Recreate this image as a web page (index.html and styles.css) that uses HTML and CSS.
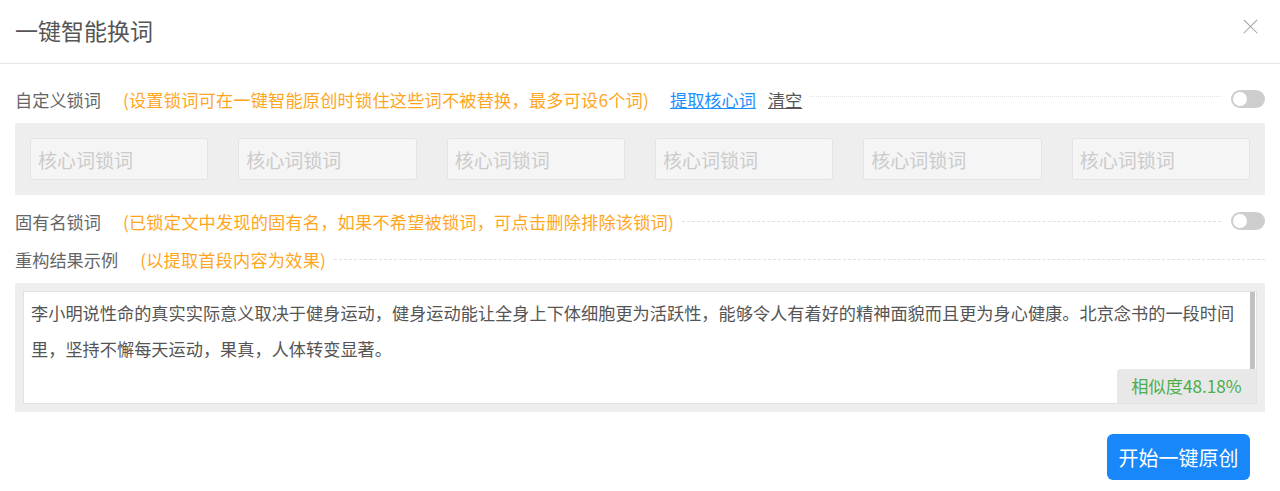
FILE: index.html
```html
<!DOCTYPE html>
<html lang="zh-CN">
<head>
    <meta charset="UTF-8">
    <title>一键智能换词</title>
    <link rel="stylesheet" href="styles.css">
</head>
<body>

    <div class="dialog">
        <!-- Kopfzeile -->
        <div class="dialog-header">
            <h2>一键智能换词</h2>
            <span class="close"></span>
        </div>

        <div class="dialog-body">
            <!-- 自定义锁词 -->
            <div class="row row-first">
                <span class="label">自定义锁词</span>
                <span class="hint">(设置锁词可在一键智能原创时锁住这些词不被替换，最多可设6个词)</span>
                <a href="#" class="link">提取核心词</a>
                <a href="#" class="link clear">清空</a>
                <span class="line dotted"></span>
                <span class="switch"></span>
            </div>
            <div class="panel lock-words">
                <input type="text" placeholder="核心词锁词">
                <input type="text" placeholder="核心词锁词">
                <input type="text" placeholder="核心词锁词">
                <input type="text" placeholder="核心词锁词">
                <input type="text" placeholder="核心词锁词">
                <input type="text" placeholder="核心词锁词">
            </div>

            <!-- 固有名锁词 -->
            <div class="row row-second">
                <span class="label">固有名锁词</span>
                <span class="hint">(已锁定文中发现的固有名，如果不希望被锁词，可点击删除排除该锁词)</span>
                <span class="line"></span>
                <span class="switch"></span>
            </div>

            <!-- 重构结果示例 -->
            <div class="row row-third">
                <span class="label">重构结果示例</span>
                <span class="hint">(以提取首段内容为效果)</span>
                <span class="line line-end"></span>
            </div>
            <div class="panel result-panel">
                <div class="result">
                    <p>李小明说性命的真实实际意义取决于健身运动，健身运动能让全身上下体细胞更为活跃性，能够令人有着好的精神面貌而且更为身心健康。北京念书的一段时间里，坚持不懈每天运动，果真，人体转变显著。</p>
                    <span class="scroll-thumb"></span>
                    <span class="similarity">相似度48.18%</span>
                </div>
            </div>

            <div class="actions">
                <button type="button" class="start">开始一键原创</button>
            </div>
        </div>
    </div>

</body>
</html>
```

FILE: styles.css
```css
body {
    margin: 0;
    background-color: #fff;
    font-family: "Noto Sans CJK SC", "Noto Sans", sans-serif;
    color: #666;
}

.dialog {
    width: 1280px;
}

.dialog-header {
    height: 63px;
    border-bottom: 1px solid #e6e6e6;
    display: flex;
    align-items: center;
    justify-content: space-between;
    padding: 0 15px;
    position: relative;
}

.dialog-header h2 {
    margin: 0;
    font-size: 23px;
    font-weight: normal;
    color: #555;
    line-height: 30px;
    margin-top: -4px;
}

.close {
    position: relative;
    width: 16px;
    height: 16px;
    margin-right: 7px;
    margin-top: -9px;
}

.close::before, .close::after {
    content: "";
    position: absolute;
    left: -1px;
    top: 7px;
    width: 19px;
    height: 1.3px;
    background-color: #a0a0a0;
    transform: rotate(45deg);
}

.close::after {
    transform: rotate(-45deg);
}

.dialog-body {
    padding: 0 15px;
}

.row {
    display: flex;
    align-items: center;
    height: 34px;
    font-size: 17.2px;
    white-space: nowrap;
}

.row-first {
    margin-top: 18px;
}

.row-second {
    margin-top: 9px;
}

.row-third {
    margin-top: 4px;
}

.label {
    color: #666;
}

.hint {
    color: #ffa61f;
    margin-left: 22px;
    letter-spacing: 0.2px;
}

.link {
    color: #1e8fff;
    margin-left: 21px;
}

.link.clear {
    color: #555;
    margin-left: 12px;
}

.line {
    flex: 1;
    border-top: 1px dashed #e0e0e0;
    margin: 0 10px 0 8px;
}

.line.dotted {
    border-top: 1px dotted #e3e3e3;
    margin-top: -5px;
}

.line-end {
    margin-right: 0;
}

.switch {
    width: 34px;
    height: 18px;
    border-radius: 9px;
    background-color: #cdcdcd;
    position: relative;
    flex-shrink: 0;
}

.switch::after {
    content: "";
    position: absolute;
    left: 2px;
    top: 2px;
    width: 14px;
    height: 14px;
    border-radius: 50%;
    background-color: #fff;
}

.panel {
    background-color: #eeeeee;
}

.lock-words {
    margin-top: 7px;
    padding: 15px;
    display: flex;
    gap: 30px;
}

.lock-words input {
    flex: 1;
    min-width: 0;
    height: 42px;
    box-sizing: border-box;
    border: 1px solid #e4e4e4;
    border-radius: 2px;
    background-color: #f5f5f5;
    padding: 0 7px;
    font-family: inherit;
    font-size: 19px;
    color: #555;
}

.lock-words input::placeholder {
    color: #cbcbcb;
}

.result-panel {
    margin-top: 7px;
    padding: 8px;
}

.result {
    position: relative;
    height: 113px;
    box-sizing: border-box;
    background-color: #fff;
    border: 1px solid #e2e2e2;
    padding: 3px 12px 0 7px;
}

.result p {
    margin: 0;
    font-size: 17.2px;
    line-height: 36px;
    color: #555;
}

.scroll-thumb {
    position: absolute;
    right: 1px;
    top: 0;
    width: 5px;
    height: 80px;
    background-color: #c1c1c1;
}

.similarity {
    position: absolute;
    right: 0;
    bottom: 0;
    width: 139px;
    height: 34px;
    line-height: 34px;
    text-align: center;
    background-color: #e8e8e8;
    border-radius: 4px 0 0 0;
    color: #4cae4c;
    font-size: 17.2px;
}

.actions {
    display: flex;
    justify-content: flex-end;
    padding-right: 15px;
    margin-top: 22px;
}

.start {
    width: 143px;
    height: 46px;
    border: none;
    border-radius: 6px;
    background-color: #1787fa;
    color: #fff;
    font-family: inherit;
    font-size: 20px;
    cursor: pointer;
}
```
